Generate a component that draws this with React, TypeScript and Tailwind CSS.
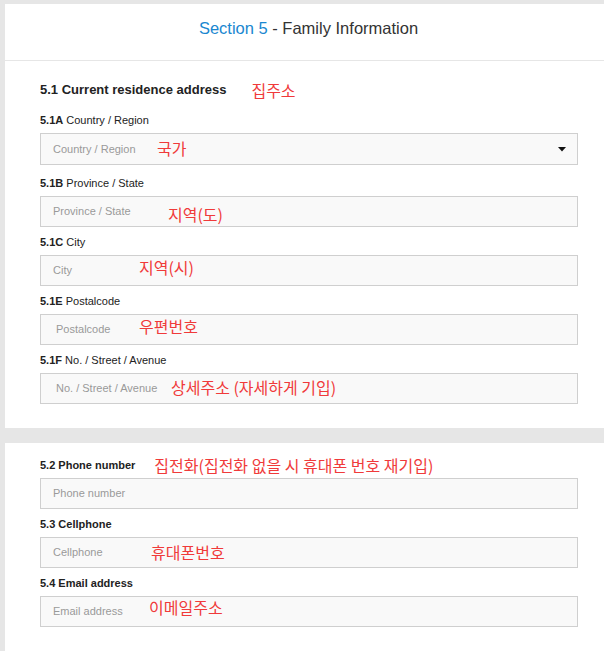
const sans = "font-['Liberation_Sans',Arial,sans-serif]";
const kr = "font-['Noto_Sans_CJK_KR','Noto_Sans',sans-serif]";

type Field = {
  code: string;
  label: string;
  placeholder: string;
  note?: string;
  noteLeft?: string;
  noteTop?: string;
  padL?: string;
  select?: boolean;
  gap?: string;
};

function Note({ text, left, top }: { text: string; left: string; top: string }) {
  return (
    <span className={`absolute ${left} ${top} ${kr} text-[16px] leading-none text-[#f03a3a] whitespace-nowrap`}>
      {text}
    </span>
  );
}

function InputBox({ f }: { f: Field }) {
  return (
    <div
      className={`relative flex items-center ${f.select ? "h-[32px]" : "h-[31px]"} border border-[#cfcfcf] bg-[#f9f9f9] ${f.padL ?? "pl-3"}`}
    >
      <span className="text-[11px] text-[#9a9a9a]">{f.placeholder}</span>
      {f.note && <Note text={f.note} left={f.noteLeft ?? "left-[110px]"} top={f.noteTop ?? "top-[7px]"} />}
      {f.select && (
        <svg className="absolute right-[11px] top-[13px]" width="8" height="5" viewBox="0 0 8 5">
          <path d="M0 0h8L4 4.5z" fill="#111" />
        </svg>
      )}
    </div>
  );
}

function FieldRow({ f }: { f: Field }) {
  return (
    <div className={f.gap ?? "mb-[8px]"}>
      <div className="h-[14px] leading-[14px] text-[11px] text-[#222] mb-[6px]">
        <span className="font-bold">{f.code}</span> {f.label}
      </div>
      <InputBox f={f} />
    </div>
  );
}

const addressFields: Field[] = [
  { code: "5.1A", label: "Country / Region", placeholder: "Country / Region", note: "국가", noteLeft: "left-[116px]", noteTop: "top-[6px]", select: true, gap: "mb-[11px]" },
  { code: "5.1B", label: "Province / State", placeholder: "Province / State", note: "지역(도)", noteLeft: "left-[127px]", noteTop: "top-[9px]" },
  { code: "5.1C", label: "City", placeholder: "City", note: "지역(시)", noteLeft: "left-[98px]", noteTop: "top-[3px]" },
  { code: "5.1E", label: "Postalcode", placeholder: "Postalcode", note: "우편번호", noteLeft: "left-[98px]", noteTop: "top-[3px]", padL: "pl-[15px]" },
  { code: "5.1F", label: "No. / Street / Avenue", placeholder: "No. / Street / Avenue", note: "상세주소 (자세하게 기입)", noteLeft: "left-[130px]", noteTop: "top-[5px]", padL: "pl-[15px]", gap: "mb-0" },
];

const contactFields: Field[] = [
  { code: "", label: "", placeholder: "Phone number" },
  { code: "5.3", label: "Cellphone", placeholder: "Cellphone", note: "휴대폰번호", noteLeft: "left-[110px]", noteTop: "top-[6px]" },
  { code: "5.4", label: "Email address", placeholder: "Email address", note: "이메일주소", noteLeft: "left-[108px]", noteTop: "top-[2px]", gap: "mb-0" },
];

export default function App() {
  return (
    <div className={`${sans} w-[604px] h-[651px] overflow-hidden bg-[#e6e6e6] pt-[4px] pl-[5px]`}>
      <div className="bg-white">
        <div className="h-[57px] border-b border-[#e6e6e6] flex items-center justify-center pb-[7px]">
          <h1 className="text-[16.5px] text-[#333] ml-[8px]">
            <span className="text-[#1a87d0]">Section 5</span> - Family Information
          </h1>
        </div>
        <div className="pl-[35px] pr-[26px] pt-[20px] pb-[24px]">
          <div className="h-[18px] flex items-center mb-[14px]">
            <span className="text-[13px] font-bold text-[#222]">5.1 Current residence address</span>
            <span className={`${kr} ml-[25px] text-[16px] leading-none text-[#f03a3a]`}>집주소</span>
          </div>
          {addressFields.map((f) => (
            <FieldRow key={f.code} f={f} />
          ))}
        </div>
      </div>

      <div className="bg-white mt-[15px] pl-[35px] pr-[26px] pt-[15px] pb-[30px]">
        <div className="mb-[8px]">
          <div className="h-[14px] flex items-center mb-[6px]">
            <span className="text-[11px] font-bold text-[#222]">5.2 Phone number</span>
            <span className={`${kr} ml-[19px] text-[16px] leading-none text-[#f03a3a]`}>
              집전화(집전화 없을 시 휴대폰 번호 재기입)
            </span>
          </div>
          <InputBox f={contactFields[0]} />
        </div>
        {contactFields.slice(1).map((f) => (
          <div key={f.code} className={f.gap ?? "mb-[8px]"}>
            <div className="h-[14px] leading-[14px] text-[11px] font-bold text-[#222] mb-[6px]">
              {f.code} {f.label}
            </div>
            <InputBox f={f} />
          </div>
        ))}
      </div>
    </div>
  );
}
